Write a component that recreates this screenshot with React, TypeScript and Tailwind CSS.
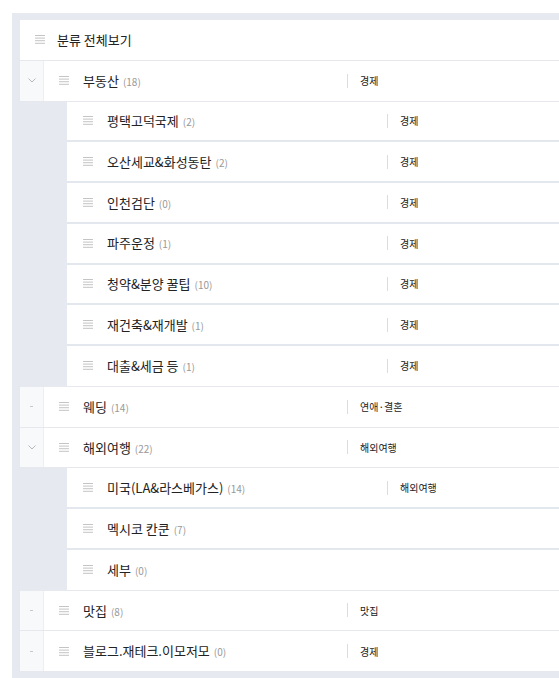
import React from "react";

type Child = { name: string; count: number; label?: string };
type Cat = { name: string; count: number; label: string; open?: boolean; children?: Child[] };

const cats: Cat[] = [
  {
    name: "부동산",
    count: 18,
    label: "경제",
    open: true,
    children: [
      { name: "평택고덕국제", count: 2, label: "경제" },
      { name: "오산세교&화성동탄", count: 2, label: "경제" },
      { name: "인천검단", count: 0, label: "경제" },
      { name: "파주운정", count: 1, label: "경제" },
      { name: "청약&분양 꿀팁", count: 10, label: "경제" },
      { name: "재건축&재개발", count: 1, label: "경제" },
      { name: "대출&세금 등", count: 1, label: "경제" },
    ],
  },
  { name: "웨딩", count: 14, label: "연애·결혼" },
  {
    name: "해외여행",
    count: 22,
    label: "해외여행",
    open: true,
    children: [
      { name: "미국(LA&라스베가스)", count: 14, label: "해외여행" },
      { name: "멕시코 칸쿤", count: 7 },
      { name: "세부", count: 0 },
    ],
  },
  { name: "맛집", count: 8, label: "맛집" },
  { name: "블로그.재테크.이모저모", count: 0, label: "경제" },
];

function Handle() {
  return (
    <svg width="10" height="9" viewBox="0 0 10 9" className="shrink-0">
      <rect x="0" y="0" width="10" height="1" fill="#c4c4c4" />
      <rect x="0" y="2.6" width="10" height="1" fill="#c4c4c4" />
      <rect x="0" y="5.2" width="10" height="1" fill="#c4c4c4" />
      <rect x="0" y="7.8" width="10" height="1" fill="#c4c4c4" />
    </svg>
  );
}

function Chevron() {
  return (
    <svg width="8" height="5" viewBox="0 0 8 5">
      <path d="M0.5 0.5 L4 4 L7.5 0.5" stroke="#b5b8bf" strokeWidth="1" fill="none" />
    </svg>
  );
}

function Label({ text }: { text?: string }) {
  if (!text) return null;
  return (
    <div className="flex items-center">
      <div className="w-px h-[14px] bg-[#dcdcdc]" />
      <span className="ml-[12px] text-[10px] text-[#222]">{text}</span>
    </div>
  );
}

function Name({ name, count }: { name: string; count: number }) {
  return (
    <div className="flex items-baseline whitespace-nowrap">
      <span className="text-[13px] text-[#222]">{name}</span>
      <span className="ml-[4px] text-[10px] text-[#999]">({count})</span>
    </div>
  );
}

export default function App() {
  return (
    <div
      className="w-[559px] h-[678px] overflow-hidden bg-white pl-[12px] pt-[13px]"
      style={{ fontFamily: '"Noto Sans CJK KR", "Noto Sans", sans-serif' }}
    >
      <div className="w-[600px] h-[700px] bg-[#e6e9f0] pl-[7px] pt-[7px]">
        <div className="bg-white border-l border-[#e6e8ee]">
          <div className="flex items-center h-[40.75px] border-b border-[#e6e8ee]">
            <div className="pl-[15px]">
              <Handle />
            </div>
            <span className="ml-[12px] text-[13px] text-[#222]">분류 전체보기</span>
          </div>
          {cats.map((c) => (
            <div key={c.name}>
              <div className="flex items-stretch h-[40.75px] border-b border-[#e6e8ee]">
                <div className="w-[24px] shrink-0 bg-[#f8f9fb] border-r border-[#eceef2] flex items-center justify-center">
                  {c.open ? <Chevron /> : <div className="w-[3px] h-px bg-[#c8c8c8]" />}
                </div>
                <div className="flex items-center pl-[15px]">
                  <Handle />
                  <div className="ml-[14px] w-[264px]">
                    <Name name={c.name} count={c.count} />
                  </div>
                  <Label text={c.label} />
                </div>
              </div>
              {c.open && c.children && (
                <div className="bg-[#e6e9f0] pl-[47px]">
                  {c.children.map((ch, i) => (
                    <div
                      key={ch.name}
                      className={
                        "flex items-center h-[40.75px] bg-white pl-[16px] " +
                        (i === c.children!.length - 1
                          ? "border-b border-[#e6e8ee]"
                          : "border-b-2 border-[#e3e7ee]")
                      }
                    >
                      <Handle />
                      <div className="ml-[14px] w-[280px]">
                        <Name name={ch.name} count={ch.count} />
                      </div>
                      <Label text={ch.label} />
                    </div>
                  ))}
                </div>
              )}
            </div>
          ))}
        </div>
      </div>
    </div>
  );
}
